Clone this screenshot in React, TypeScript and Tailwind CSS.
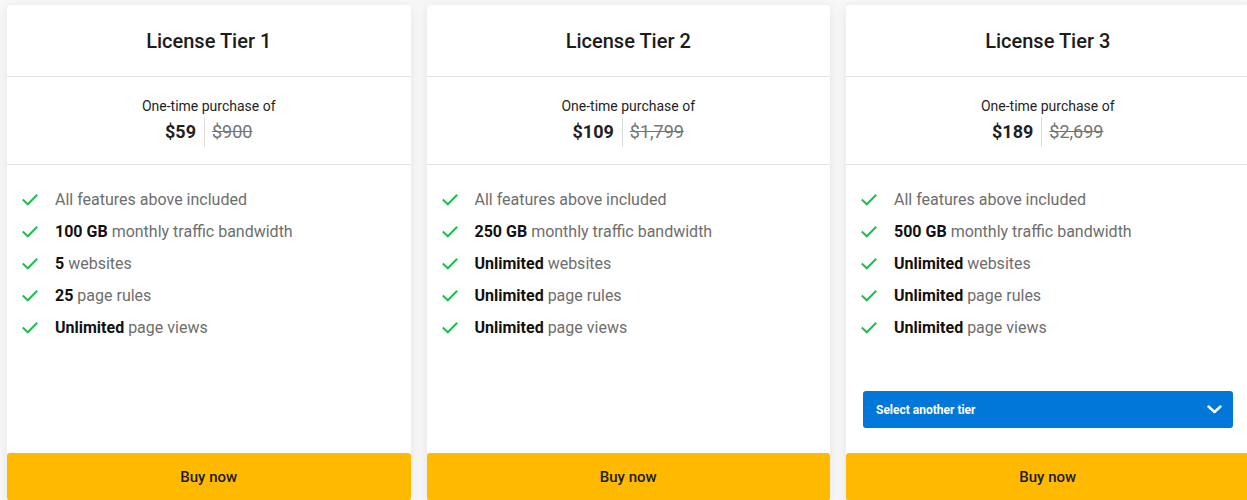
import React from "react";

type Feature = { bold?: string; text: string };
type Tier = { name: string; price: string; old: string; features: Feature[]; select?: boolean };

const tiers: Tier[] = [
  {
    name: "License Tier 1",
    price: "$59",
    old: "$900",
    features: [
      { text: "All features above included" },
      { bold: "100 GB", text: "monthly traffic bandwidth" },
      { bold: "5", text: "websites" },
      { bold: "25", text: "page rules" },
      { bold: "Unlimited", text: "page views" },
    ],
  },
  {
    name: "License Tier 2",
    price: "$109",
    old: "$1,799",
    features: [
      { text: "All features above included" },
      { bold: "250 GB", text: "monthly traffic bandwidth" },
      { bold: "Unlimited", text: "websites" },
      { bold: "Unlimited", text: "page rules" },
      { bold: "Unlimited", text: "page views" },
    ],
  },
  {
    name: "License Tier 3",
    price: "$189",
    old: "$2,699",
    select: true,
    features: [
      { text: "All features above included" },
      { bold: "500 GB", text: "monthly traffic bandwidth" },
      { bold: "Unlimited", text: "websites" },
      { bold: "Unlimited", text: "page rules" },
      { bold: "Unlimited", text: "page views" },
    ],
  },
];

function Check() {
  return (
    <svg width="16" height="12" viewBox="0 0 16 12" fill="none">
      <path d="M1.5 6.2 L5.8 10.3 L14.5 1.5" stroke="#1cbf4f" strokeWidth="2" strokeLinecap="square" />
    </svg>
  );
}

function Chevron() {
  return (
    <svg width="15" height="9" viewBox="0 0 15 9" fill="none">
      <path d="M1.5 1.5 L7.5 7 L13.5 1.5" stroke="#ffffff" strokeWidth="2.4" strokeLinecap="round" strokeLinejoin="round" />
    </svg>
  );
}

function Card({ t }: { t: Tier }) {
  return (
    <div className="flex h-[496px] w-[403.5px] shrink-0 flex-col overflow-hidden rounded-[4px] bg-white shadow-[0_2px_12px_rgba(0,0,0,0.08)]">
      <div className="flex h-[72px] items-center justify-center border-b border-[#e3e3e3]">
        <span className="text-[20px] font-medium text-[#1c1c1c]">{t.name}</span>
      </div>
      <div className="flex h-[88px] flex-col items-center justify-center border-b border-[#e3e3e3] pt-[2px]">
        <div className="text-[14px] leading-[18px] text-[#1f1f1f]">One-time purchase of</div>
        <div className="mt-[2px] flex h-[30px] items-center">
          <span className="pr-[8px] text-[18px] font-bold text-[#1f1f1f]">{t.price}</span>
          <span className="h-[30px] w-px bg-[#dedede]" />
          <span className="pl-[7px] text-[18px] text-[#757575] line-through">{t.old}</span>
        </div>
      </div>
      <div className="flex flex-1 flex-col">
        <ul className="pt-[19px] pl-[15px]">
          {t.features.map((f, i) => (
            <li key={i} className="flex h-[32px] items-center">
              <span className="flex w-[33px] shrink-0 items-center">
                <Check />
              </span>
              <span className="text-[16px] text-[#6e6e6e]">
                {f.bold && <b className="font-bold text-[#111]">{f.bold} </b>}
                {f.text}
              </span>
            </li>
          ))}
        </ul>
        {t.select && (
          <div className="mt-auto mb-[25px] pl-[17px] pr-[16.5px]">
            <button className="flex h-[37px] w-full items-center justify-between rounded-[3px] bg-[#0177d9] pl-[13px] pr-[11px] text-[12px] font-bold text-white">
              <span>Select another tier</span>
              <Chevron />
            </button>
          </div>
        )}
      </div>
      <button className="h-[48px] w-full shrink-0 rounded-t-[3px] bg-[#ffba00] text-[15px] font-medium text-[#1c1c1c]">
        Buy now
      </button>
    </div>
  );
}

export default function App() {
  return (
    <div
      className="h-[500px] w-[1247px] overflow-hidden bg-[#f7f7f7]"
      style={{ fontFamily: "Roboto, 'Liberation Sans', sans-serif" }}
    >
      <div className="flex gap-[16px] pt-[5px] pl-[7px]">
        {tiers.map((t) => (
          <Card key={t.name} t={t} />
        ))}
      </div>
    </div>
  );
}
